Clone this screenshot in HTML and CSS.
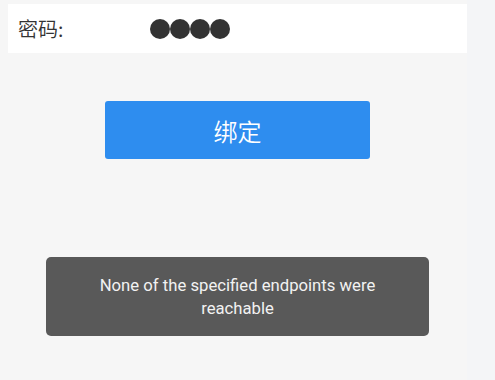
FILE: index.html
```html
<!DOCTYPE html>
<html lang="zh">
<head>
<meta charset="utf-8">
<title>绑定</title>
<link rel="stylesheet" href="styles.css">
</head>
<body>
<div class="page">
  <main class="main">
    <div class="field">
      <span class="label">密码:</span>
      <span class="dots" aria-label="password">
        <span class="dot"></span><span class="dot"></span><span class="dot"></span><span class="dot"></span>
      </span>
    </div>
    <button class="bind">绑定</button>
  </main>
  <aside class="strip"></aside>
</div>
<div class="toast">None of the specified endpoints were reachable</div>
</body>
</html>
```
FILE: styles.css
```css
html, body {
  margin: 0;
  padding: 0;
}
body {
  width: 495px;
  height: 380px;
  background: #f6f6f6;
  font-family: Roboto, "Noto Sans CJK SC", sans-serif;
  position: relative;
  overflow: hidden;
}
.page {
  display: flex;
  height: 380px;
}
.main {
  width: 467px;
  box-sizing: border-box;
  padding: 4px 0 0 8px;
  display: flex;
  flex-direction: column;
}
.strip {
  flex: 1;
  background: #f4f5f7;
}
.field {
  height: 49px;
  background: #ffffff;
  display: flex;
  align-items: center;
  padding-left: 10px;
}
.label {
  font-family: "Noto Sans CJK SC", sans-serif;
  font-size: 20px;
  font-weight: 350;
  color: #333333;
  width: 132px;
  line-height: 1;
}
.dots {
  display: flex;
}
.dot {
  width: 20px;
  height: 20px;
  border-radius: 50%;
  background: #333333;
}
.bind {
  margin: 48px 0 0 97px;
  width: 265px;
  height: 58px;
  border: none;
  border-radius: 3px;
  background: #2e8def;
  color: #ffffff;
  font-family: "Noto Sans CJK SC", sans-serif;
  font-size: 24px;
  font-weight: 350;
  padding: 0;
}
.toast {
  position: absolute;
  left: 46px;
  top: 257px;
  width: 383px;
  height: 79px;
  box-sizing: border-box;
  padding: 0 40px;
  background: #595959;
  border-radius: 5px;
  color: #f2f2f2;
  font-family: Roboto, sans-serif;
  font-size: 16.7px;
  line-height: 23px;
  text-align: center;
  display: flex;
  align-items: center;
  justify-content: center;
}
```
